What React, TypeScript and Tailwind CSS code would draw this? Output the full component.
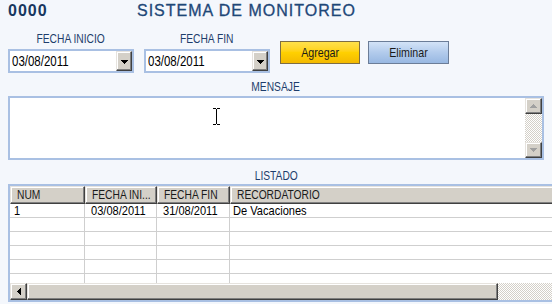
import React from "react";

const sans = "font-['Liberation_Sans',Arial,sans-serif]";

function N({ children, origin = "left" }: { children: React.ReactNode; origin?: "left" | "center" }) {
  return (
    <span
      className={`inline-block whitespace-nowrap scale-x-[0.82] ${origin === "left" ? "origin-left" : "origin-center"}`}
    >
      {children}
    </span>
  );
}

function TriDown({ color = "#000" }: { color?: string }) {
  return (
    <svg width="7" height="4" viewBox="0 0 7 4" shapeRendering="crispEdges" fill={color}>
      <rect x="0" y="0" width="7" height="1" />
      <rect x="1" y="1" width="5" height="1" />
      <rect x="2" y="2" width="3" height="1" />
      <rect x="3" y="3" width="1" height="1" />
    </svg>
  );
}
function TriUp({ color = "#000" }: { color?: string }) {
  return (
    <svg width="7" height="4" viewBox="0 0 7 4" shapeRendering="crispEdges" fill={color}>
      <rect x="3" y="0" width="1" height="1" />
      <rect x="2" y="1" width="3" height="1" />
      <rect x="1" y="2" width="5" height="1" />
      <rect x="0" y="3" width="7" height="1" />
    </svg>
  );
}
function TriLeft() {
  return (
    <svg width="4" height="7" viewBox="0 0 4 7" shapeRendering="crispEdges" fill="#000">
      <rect x="0" y="3" width="1" height="1" />
      <rect x="1" y="2" width="1" height="3" />
      <rect x="2" y="1" width="1" height="5" />
      <rect x="3" y="0" width="1" height="7" />
    </svg>
  );
}

const raised =
  "bg-[#d4d0c8] border border-t-[#e6e3de] border-l-[#e6e3de] border-r-[#404040] border-b-[#404040] shadow-[inset_-1px_-1px_#808080,inset_1px_1px_#ffffff]";
const checker =
  "bg-[image:repeating-conic-gradient(#d4d0c8_0%_25%,#ffffff_0%_50%)] bg-[length:2px_2px]";

function Combo({ value }: { value: string }) {
  return (
    <div className="mt-[3px] h-[24px] w-[126px] border-2 border-[#a9c0e3] bg-white flex items-stretch">
      <div className={`flex-1 flex items-center pl-[2px] text-[14px] leading-[16px] text-black ${sans}`}>
        <N>{value}</N>
      </div>
      <div className={`w-[16px] ${raised} flex items-center justify-center pt-[1px]`}>
        <TriDown />
      </div>
    </div>
  );
}

function Label({ children }: { children: React.ReactNode }) {
  return (
    <div className={`h-[14px] leading-[14px] text-[12.5px] text-[#1d3d6b] text-center ${sans}`}>
      <N origin="center">{children}</N>
    </div>
  );
}

const rows = [
  ["1", "03/08/2011", "31/08/2011", "De Vacaciones"],
  ["", "", "", ""],
  ["", "", "", ""],
  ["", "", "", ""],
  ["", "", "", ""],
  ["", "", "", ""],
];

export default function App() {
  return (
    <div className="relative w-[552px] h-[304px] overflow-hidden bg-[#f4f7fc] flex flex-col">
      {/* header */}
      <div className={`h-[22px] flex items-center pl-2 ${sans}`}>
        <span className="w-[129px] text-[16px] font-bold tracking-[1px] text-[#17375f]">0000</span>
        <span className="text-[16px] tracking-[1px] text-[#1e4778] [-webkit-text-stroke:0.3px_#1e4778]">
          SISTEMA DE MONITOREO
        </span>
      </div>

      <div className="px-2 flex flex-col">
        {/* dates + buttons */}
        <div className="mt-[10px] flex items-start">
          <div className="w-[126px] flex flex-col">
            <Label>FECHA INICIO</Label>
            <Combo value="03/08/2011" />
          </div>
          <div className="ml-[10px] w-[126px] flex flex-col">
            <Label>FECHA FIN</Label>
            <Combo value="03/08/2011" />
          </div>
          <button
            className={`ml-[10px] mt-[9px] w-[80px] h-[23px] border border-[#7d6d45] bg-linear-to-b from-[#ffe14a] via-[#ffd000] to-[#f3b900] text-[13px] text-[#1a1a1a] ${sans}`}
          >
            <N origin="center">Agregar</N>
          </button>
          <button
            className={`ml-[8px] mt-[9px] w-[81px] h-[23px] border border-[#6b7d98] bg-linear-to-b from-[#d3e3f7] via-[#b2cbec] to-[#98b8e2] text-[13px] text-[#1a1a1a] ${sans}`}
          >
            <N origin="center">Eliminar</N>
          </button>
        </div>

        {/* mensaje */}
        <div className="mt-[7px]">
          <Label>MENSAJE</Label>
        </div>
        <div className="mt-[2px] h-[64px] border-2 border-[#a9c0e3] bg-white flex justify-end">
          <div className="w-[17px] flex flex-col">
            <div className={`h-[16px] ${raised} flex items-center justify-center`}>
              <TriUp color="#a0a0a0" />
            </div>
            <div className={`flex-1 ${checker}`} />
            <div className={`h-[16px] ${raised} flex items-center justify-center`}>
              <TriDown color="#a0a0a0" />
            </div>
          </div>
        </div>

        {/* listado */}
        <div className="mt-[9px]">
          <Label>LISTADO</Label>
        </div>
        <div className="mt-[1px] w-[560px] h-[118px] border-2 border-r-0 border-[#a9c0e3] bg-white flex flex-col">
          <div className={`h-[18px] flex text-[12.5px] text-[#1a1a1a] ${sans}`}>
            {[
              ["NUM", "w-[75px]"],
              ["FECHA INI...", "w-[72px]"],
              ["FECHA FIN", "w-[73px]"],
              ["RECORDATORIO", "flex-1"],
            ].map(([t, w]) => (
              <div key={t} className={`${w} ${raised} flex items-center pl-[6px] leading-[14px] overflow-hidden`}>
                <N>{t}</N>
              </div>
            ))}
          </div>
          <div className="flex-1 overflow-hidden">
            {rows.map((r, i) => (
              <div
                key={i}
                className={`h-[14px] flex border-b border-[#cfcfcf] text-[13.5px] leading-[13px] text-black ${sans}`}
              >
                <div className="w-[75px] border-r border-[#cfcfcf] pl-[4px] overflow-hidden">
                  <N>{r[0]}</N>
                </div>
                <div className="w-[72px] border-r border-[#cfcfcf] pl-[6px] overflow-hidden">
                  <N>{r[1]}</N>
                </div>
                <div className="w-[73px] border-r border-[#cfcfcf] pl-[6px] overflow-hidden">
                  <N>{r[2]}</N>
                </div>
                <div className="flex-1 pl-[3px] overflow-hidden">
                  <N>{r[3]}</N>
                </div>
              </div>
            ))}
          </div>
          <div className="h-[17px] flex">
            <div className={`w-[17px] ${raised} flex items-center justify-center`}>
              <TriLeft />
            </div>
            <div className={`w-[471px] ${raised}`} />
            <div className={`flex-1 ${checker}`} />
          </div>
        </div>
      </div>

      {/* I-beam mouse cursor */}
      <svg
        className="absolute left-[212px] top-[108px]"
        width="9"
        height="17"
        viewBox="0 0 9 17"
        shapeRendering="crispEdges"
        fill="#000"
      >
        <rect x="1" y="0" width="3" height="1" />
        <rect x="5" y="0" width="3" height="1" />
        <rect x="4" y="1" width="1" height="15" />
        <rect x="1" y="16" width="3" height="1" />
        <rect x="5" y="16" width="3" height="1" />
      </svg>
    </div>
  );
}
